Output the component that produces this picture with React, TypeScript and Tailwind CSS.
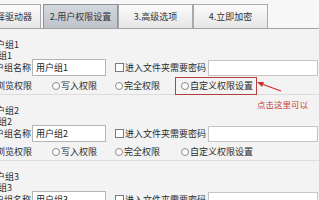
import React from "react";

function Radio({ w, label }: { w: string; label: string }) {
  return (
    <div className={"flex items-center shrink-0 " + w}>
      <div className="w-[8px] h-[8px] rounded-full border border-[#8a8a8a] bg-white shrink-0 mr-[1px]"></div>
      <span className="whitespace-nowrap">{label}</span>
    </div>
  );
}

function Group({ n, first }: { n: number; first?: boolean }) {
  return (
    <div className="h-[66px] box-border border-b border-[#dcdcdc] pt-[10px] flex flex-col">
      <div className="h-[12px] leading-[12px] ml-[-4px] shrink-0 whitespace-nowrap">户组{n}</div>
      <div className="h-[10px] leading-[10px] ml-[-2px] shrink-0 whitespace-nowrap">组{n}</div>
      <div className="mt-[-2px] h-[17px] flex items-center shrink-0">
        <span className="ml-[-5px] w-[37px] shrink-0 whitespace-nowrap">户组名称</span>
        <div className="w-[74px] h-[17px] box-border bg-white border border-[#b4b4b4] flex items-center pl-[3px] text-[#222] shrink-0 whitespace-nowrap">
          用户组{n}
        </div>
        <div className="ml-[9px] w-[9px] h-[9px] box-border border border-[#7a7a7a] bg-white shrink-0"></div>
        <span className="ml-[1px] whitespace-nowrap shrink-0">进入文件夹需要密码</span>
        <div className="ml-[2px] w-[110px] h-[16px] box-border bg-white border border-[#c4c4c4] shrink-0"></div>
      </div>
      <div className="mt-[1px] h-[18px] flex items-center shrink-0">
        <span className="ml-[-4px] w-[56px] shrink-0 whitespace-nowrap">浏览权限</span>
        <Radio w="w-[63px]" label="写入权限" />
        <Radio w="w-[60px]" label="完全权限" />
        <div
          className={
            first
              ? "h-[18px] box-border flex items-center pl-[5px] pr-[3px] border border-[#b0413e] shrink-0"
              : "h-[18px] box-border flex items-center pl-[5px] pr-[3px] border border-transparent shrink-0"
          }
        >
          <div className="w-[8px] h-[8px] rounded-full border border-[#8a8a8a] bg-white shrink-0 mr-[1px]"></div>
          <span className="whitespace-nowrap">自定义权限设置</span>
        </div>
      </div>
    </div>
  );
}

function Tab({ children, cls, selected }: { children: React.ReactNode; cls: string; selected?: boolean }) {
  return (
    <div
      className={
        (selected
          ? "bg-gradient-to-b from-[#d3d7de] to-[#bfc4cc] border-[#8a919c] "
          : "bg-gradient-to-b from-[#fbfbfb] to-[#e6e6e6] border-[#a9a9a9] ") +
        "h-[24px] box-border border border-b-0 flex items-center shrink-0 whitespace-nowrap text-[#333] " +
        cls
      }
    >
      {children}
    </div>
  );
}

export default function App() {
  return (
    <div className="w-[319px] h-[200px] overflow-hidden relative bg-[#f3f3f3] text-[9px] leading-[12px] text-[#2a2a2a] font-['Noto_Sans_CJK_SC','Noto_Sans',sans-serif]">
      <div className="h-[29px] box-border flex items-end border-b border-[#a3a3a3] bg-[#f7f7f7]">
        <Tab cls="ml-[-7px] w-[48px] justify-end pr-[8px]">择驱动器</Tab>
        <Tab cls="ml-[2px] w-[75px] justify-center" selected>
          2.用户权限设置
        </Tab>
        <Tab cls="w-[75px] justify-center">3.高级选项</Tab>
        <Tab cls="w-[75px] justify-center">4.立即加密</Tab>
      </div>
      <div className="flex flex-col pl-0">
        <Group n={1} first />
        <Group n={2} />
        <Group n={3} />
      </div>
      <svg className="absolute left-[254px] top-[78px]" width="32" height="18" viewBox="0 0 32 18">
        <line x1="5" y1="5" x2="27" y2="13" stroke="#cc2f2f" strokeWidth="1.3" />
        <polygon points="3,4 10,4 8,9" fill="#cc2f2f" />
      </svg>
      <div className="absolute left-[257px] top-[98px] text-[8.5px] leading-[12px] text-[#c2413b] whitespace-nowrap">
        点击这里可以
      </div>
    </div>
  );
}
